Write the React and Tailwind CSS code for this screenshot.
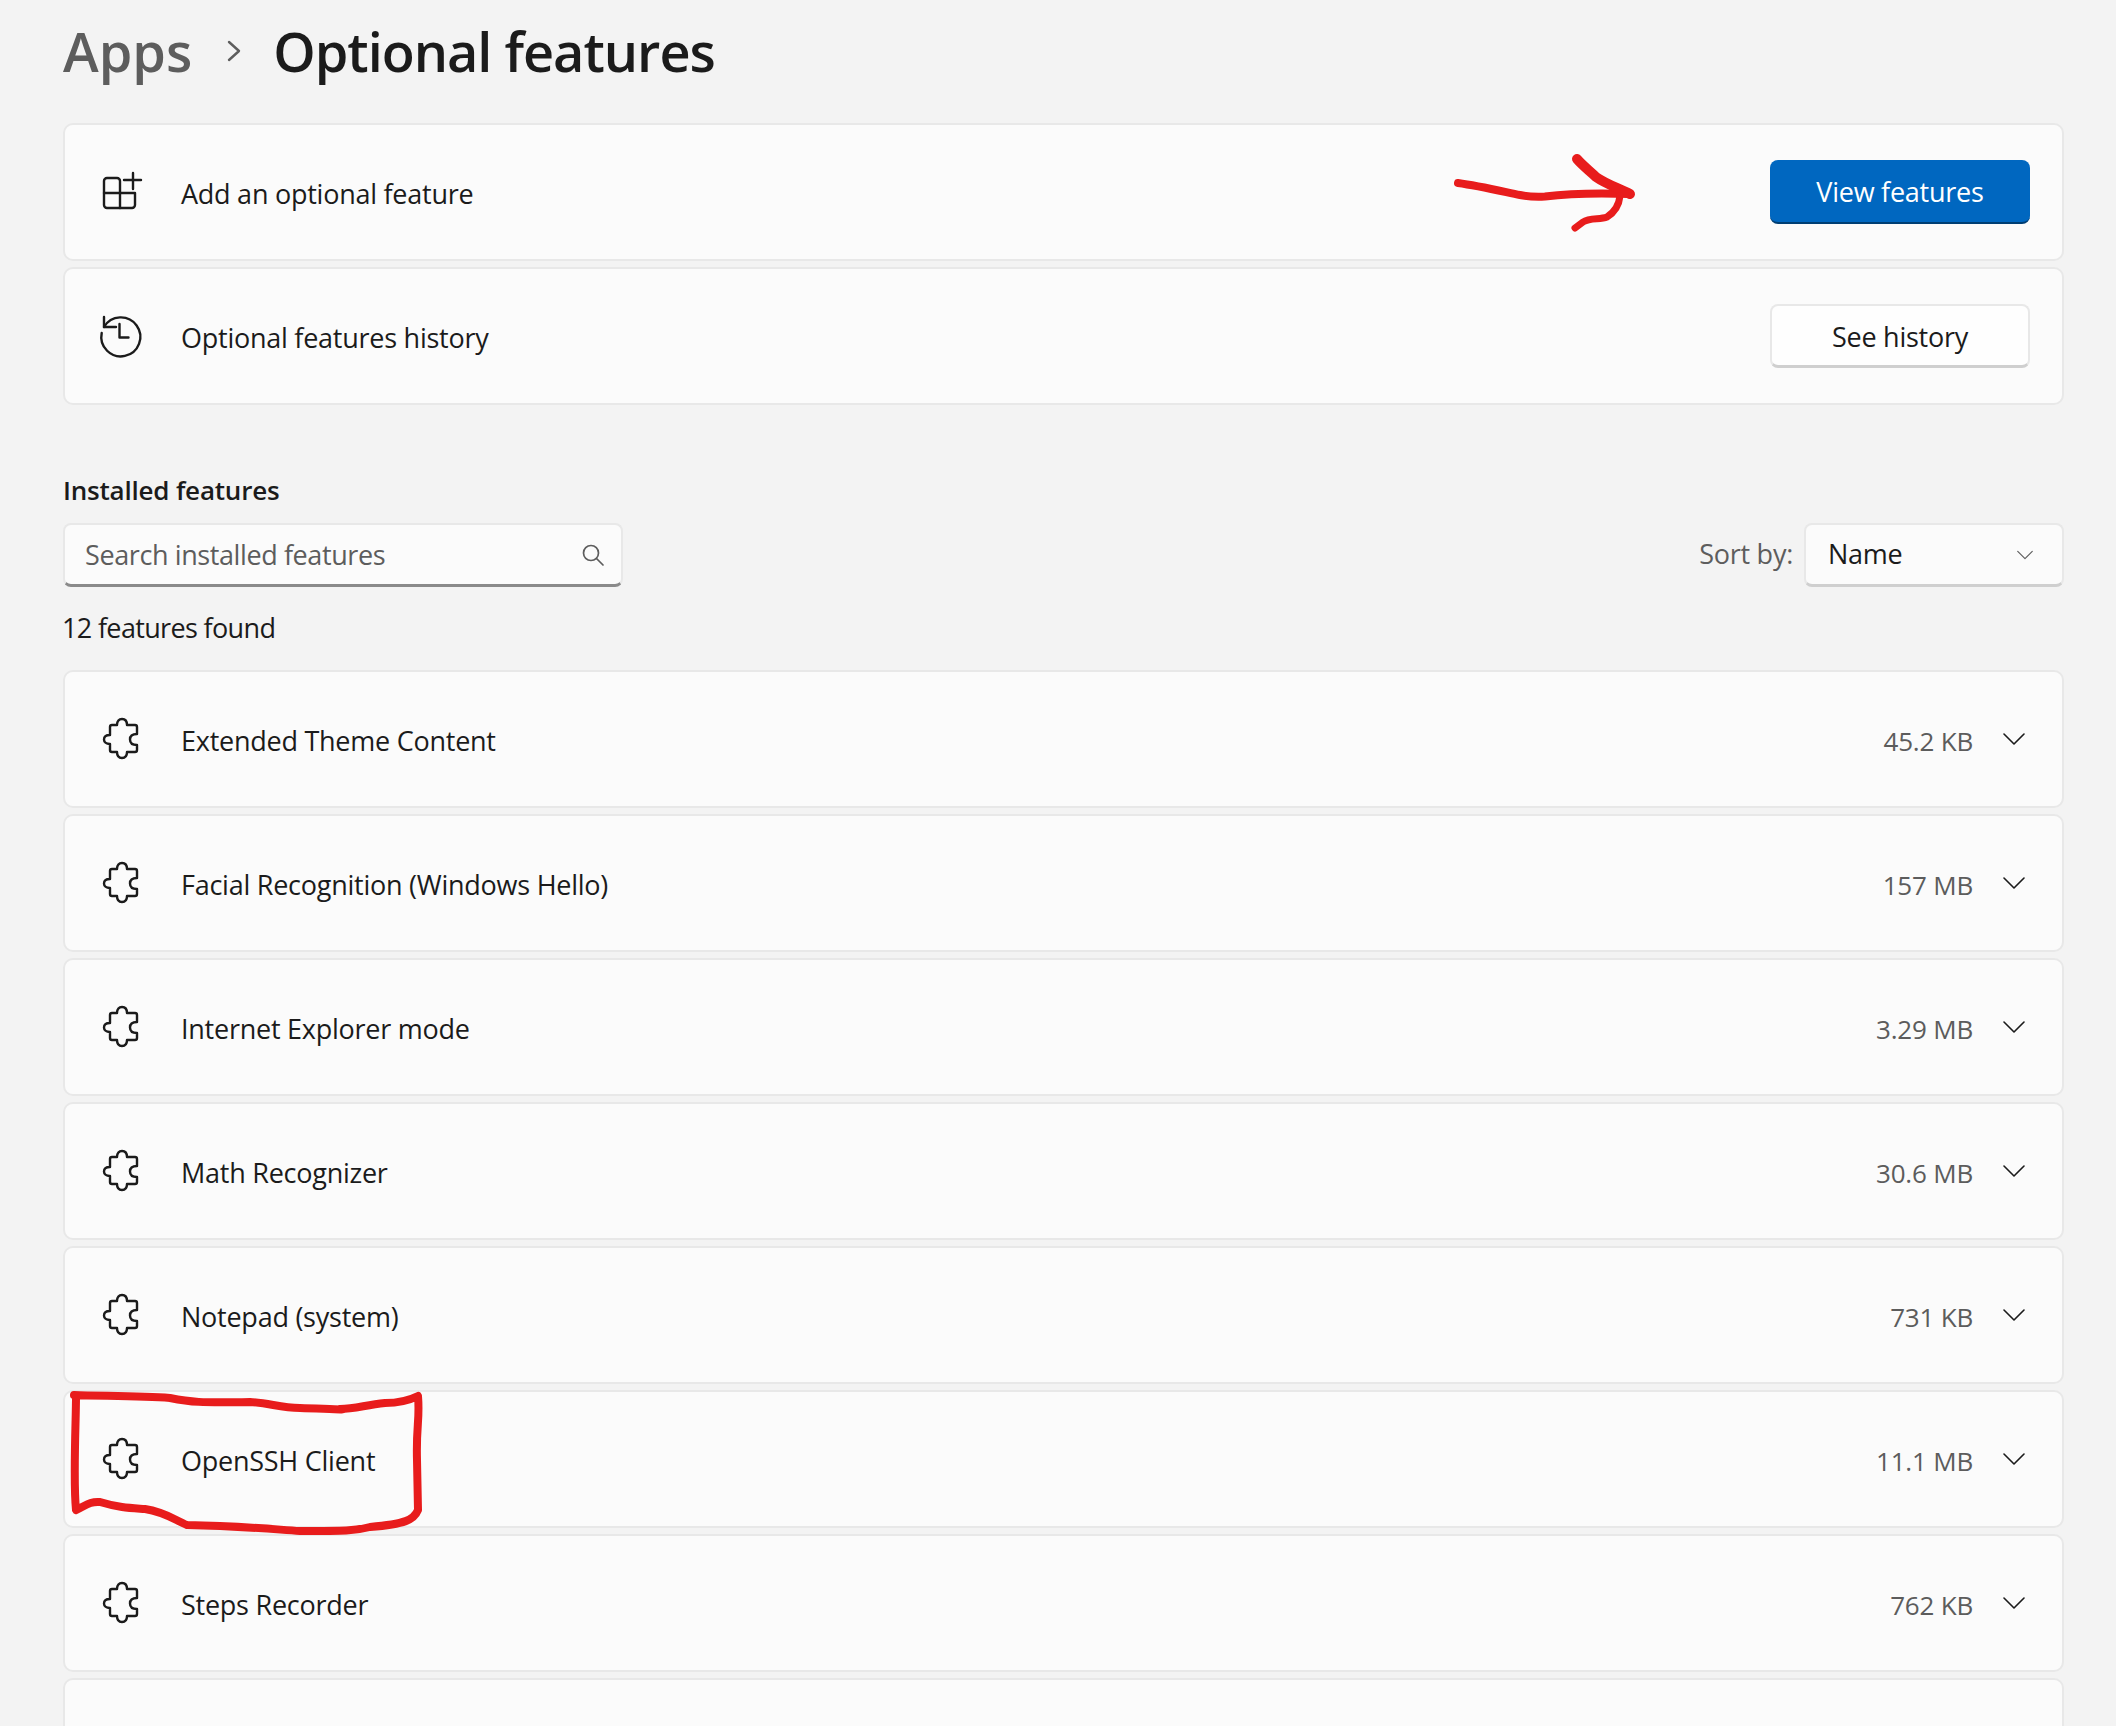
const FONT = "font-['Open_Sans','Noto_Sans',sans-serif]"

const features = [
  { name: 'Extended Theme Content', size: '45.2 KB' },
  { name: 'Facial Recognition (Windows Hello)', size: '157 MB' },
  { name: 'Internet Explorer mode', size: '3.29 MB' },
  { name: 'Math Recognizer', size: '30.6 MB' },
  { name: 'Notepad (system)', size: '731 KB' },
  { name: 'OpenSSH Client', size: '11.1 MB' },
  { name: 'Steps Recorder', size: '762 KB' },
]

function AddIcon() {
  return (
    <svg width="48" height="48" viewBox="0 0 48 48" fill="none" stroke="#1b1b1b" strokeWidth="2.4" strokeLinecap="round" strokeLinejoin="round" className="shrink-0">
      <path d="M7 25V13a3 3 0 0 1 3-3h10a3 3 0 0 1 3 3v12" />
      <path d="M7 25V37a3 3 0 0 0 3 3h25a3 3 0 0 0 3-3V25H7" />
      <path d="M23 25V40" />
      <path d="M27 12H44M36 5V21" />
    </svg>
  )
}

function HistoryIcon() {
  return (
    <svg width="48" height="48" viewBox="0 0 48 48" fill="none" stroke="#1b1b1b" strokeWidth="2.4" strokeLinecap="round" strokeLinejoin="round" className="shrink-0">
      <path d="M7 15A19.5 19.5 0 1 1 4.700 21" />
      <path d="M7 5V15H19" />
      <path d="M22.500 12V25.500H31.500" />
    </svg>
  )
}

function PuzzleIcon() {
  return (
    <svg width="48" height="48" viewBox="0 0 48 48" fill="none" stroke="#1b1b1b" strokeWidth="2.4" strokeLinecap="round" strokeLinejoin="round" className="shrink-0">
      <path d="M15 10H20C20 6 22 4 25 4C28 4 30 6 30 10H38C39.500 10 40 10.500 40 12V19C35 19 33 21.500 33 24.500C33 27.500 35 30 40 30V35C40 36.500 39.500 37 38 37H30C30 41 28 43 25 43C22 43 20 41 20 37H15C13.500 37 13 36.500 13 35V29C9 29 7 27 7 24.500C7 22 9 20 13 20V12C13 10.500 13.500 10 15 10Z" />
    </svg>
  )
}

function Chevron({ className }) {
  return (
    <svg viewBox="0 0 22 12" fill="none" stroke="currentColor" strokeWidth="1.6" strokeLinecap="round" strokeLinejoin="round" className={className}>
      <path d="M1 1L11 11L21 1" />
    </svg>
  )
}

function Card({ icon, children, right }) {
  return (
    <div className="flex h-[138px] items-center rounded-[10px] border-2 border-[#e8e8e8] bg-[#fbfbfb] pl-[32px] pr-[32px]">
      {icon}
      <div className="ml-[36px] flex-1 pt-[4px] text-[27px] tracking-[-0.25px] text-[#1b1b1b]">{children}</div>
      {right}
    </div>
  )
}

function FeatureRow({ name, size }) {
  return (
    <Card
      icon={<PuzzleIcon />}
      right={
        <div className="flex items-center pr-[5px]">
          <span className="pt-[4px] text-[26px] tracking-[-0.2px] text-[#5c5c5c]">{size}</span>
          <Chevron className="ml-[30px] h-[12px] w-[22px] text-[#1b1b1b]" />
        </div>
      }
    >
      {name}
    </Card>
  )
}

// hand drawn marks on top of the screenshot
function Annotations() {
  return (
    <svg width="2116" height="1726" viewBox="0 0 2116 1726" fill="none" stroke="#e81c1c" strokeLinecap="round" strokeLinejoin="round" className="pointer-events-none absolute left-0 top-0">
      <path strokeWidth="8" d="M1458 183C1480 186 1505 192 1520 195C1530 197 1535 197 1545 196.500C1565 194 1600 193 1630 194" />
      <path strokeWidth="10" d="M1577 159C1583 166 1590 171 1596 177C1606 184 1618 188 1630 194" />
      <path strokeWidth="7" d="M1620 196C1619 205 1615 212 1607 217C1600 220 1590 217 1583 222L1575 228" />
      <path strokeWidth="8" d="M74 1395C100 1396 140 1396 170 1398C190 1402 200 1403 250 1402C270 1403 280 1408 300 1408C330 1409 350 1410 340 1409C355 1409 365 1405 385 1403C400 1403 410 1400 418 1396C420 1420 416 1425 417 1460L418 1510C414 1520 405 1524 370 1527C355 1531 345 1531 300 1531C270 1529 240 1526 187 1525C175 1520 165 1512 145 1509C130 1508 120 1508 100 1502C90 1501 85 1506 76 1510C73 1480 76 1420 76 1398" />
    </svg>
  )
}

export default function App() {
  return (
    <div className={`${FONT} relative h-[1726px] w-[2116px] overflow-hidden bg-[#f3f3f3] pl-[63px] pr-[52px]`}>
      <div className="flex h-[123px] items-start pt-[13px]">
        <h1 className="flex h-[76px] items-center text-[54px] font-semibold text-[#5d5d5d]">Apps</h1>
        <svg width="16" height="24" viewBox="0 0 16 24" fill="none" stroke="#5d5d5d" strokeWidth="2.4" strokeLinecap="round" strokeLinejoin="round" className="ml-[34px] mr-[31px] mt-[26px]">
          <path d="M3 3L13 12L3 21" />
        </svg>
        <h1 className="flex h-[76px] items-center text-[54px] font-semibold tracking-[-1px] text-[#1b1b1b]">Optional features</h1>
      </div>

      <div className="flex flex-col gap-[6px]">
        <Card
          icon={<AddIcon />}
          right={
            <button className="flex h-[64px] w-[260px] items-center justify-center rounded-[8px] border-b-2 border-[#003e73] bg-[#0067c0] pt-[2px] text-[27px] tracking-[-0.25px] text-white">
              View features
            </button>
          }
        >
          Add an optional feature
        </Card>
        <Card
          icon={<HistoryIcon />}
          right={
            <button className="flex h-[64px] w-[260px] items-center justify-center rounded-[8px] border-2 border-b-[3px] border-[#e8e8e8] border-b-[#cfcfcf] bg-[#fefefe] pt-[3px] text-[27px] tracking-[-0.25px] text-[#1b1b1b]">
              See history
            </button>
          }
        >
          Optional features history
        </Card>
      </div>

      <h2 className="mt-[65px] flex h-[40px] items-center text-[26px] font-semibold tracking-[-0.2px] text-[#1b1b1b]">Installed features</h2>
      <div className="mt-[13px] flex items-center justify-between">
        <div className="flex h-[64px] w-[560px] items-center justify-between rounded-[8px] border-2 border-b-[3px] border-[#e8e8e8] border-b-[#8a8a8a] bg-[#fbfbfb] pl-[20px] pr-[16px]">
          <span className="pt-[2px] text-[27px] tracking-[-0.4px] text-[#5d5d5d]">Search installed features</span>
          <svg width="24" height="24" viewBox="0 0 24 24" fill="none" stroke="#5d5d5d" strokeWidth="1.7" strokeLinecap="round">
            <circle cx="10" cy="10" r="7.500" />
            <path d="M15.500 15.500L22 22" />
          </svg>
        </div>
        <div className="flex items-center">
          <span className="pb-[2px] text-[27px] tracking-[-0.25px] text-[#5d5d5d]">Sort by:</span>
          <div className="ml-[11px] flex h-[64px] w-[260px] items-center justify-between rounded-[8px] border-2 border-b-[3px] border-[#e8e8e8] border-b-[#cfcfcf] bg-[#fbfbfb] pl-[22px] pr-[29px]">
            <span className="text-[27px] tracking-[-0.25px] text-[#1b1b1b]">Name</span>
            <Chevron className="h-[10px] w-[16px] text-[#5d5d5d]" />
          </div>
        </div>
      </div>
      <div className="mt-[21px] -ml-[1px] flex h-[40px] items-center text-[27px] tracking-[-0.65px] text-[#1b1b1b]">12 features found</div>

      <div className="mt-[22px] flex flex-col gap-[6px]">
        {features.map((f) => (
          <FeatureRow key={f.name} name={f.name} size={f.size} />
        ))}
        <div className="h-[138px] rounded-[10px] border-2 border-[#e8e8e8] bg-[#fbfbfb]" />
      </div>

      <Annotations />
    </div>
  )
}
